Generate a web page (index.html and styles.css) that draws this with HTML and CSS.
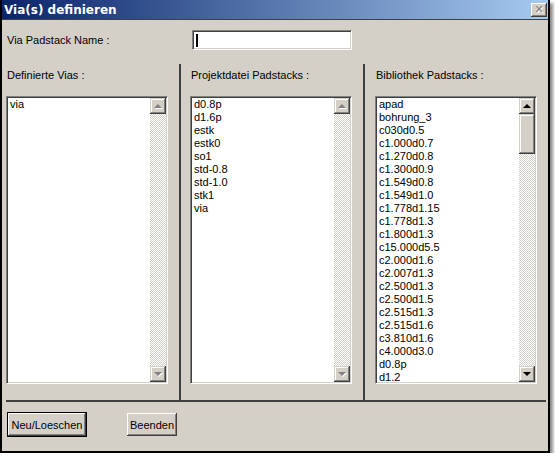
FILE: index.html
```html
<!DOCTYPE html>
<html lang="de">
<head>
  <meta charset="UTF-8">
  <title>Via(s) definieren</title>
  <link rel="stylesheet" href="styles.css">
</head>
<body>
  <div class="window">
    <div class="titlebar">
      <span class="title">Via(s) definieren</span>
      <span class="close"><span class="close-x">&#x2715;</span></span>
    </div>

    <div class="content">
      <!-- Name -->
      <div class="name-row">
        <span class="name-label">Via Padstack Name :</span>
        <div class="textbox"><span class="caret"></span></div>
      </div>

      <!-- drei Listen -->
      <div class="panels">
        <div class="panel panel-1">
          <div class="panel-label">Definierte Vias :</div>
          <div class="list">
            <div class="items">
              <div>via</div>
            </div>
            <div class="scrollbar">
              <div class="sb-btn"><span class="arrow up disabled"></span></div>
              <div class="track"></div>
              <div class="sb-btn"><span class="arrow down disabled"></span></div>
            </div>
          </div>
        </div>
        <div class="divider"></div>
        <div class="panel panel-2">
          <div class="panel-label">Projektdatei Padstacks :</div>
          <div class="list">
            <div class="items">
              <div>d0.8p</div>
              <div>d1.6p</div>
              <div>estk</div>
              <div>estk0</div>
              <div>so1</div>
              <div>std-0.8</div>
              <div>std-1.0</div>
              <div>stk1</div>
              <div>via</div>
            </div>
            <div class="scrollbar">
              <div class="sb-btn"><span class="arrow up disabled"></span></div>
              <div class="track"></div>
              <div class="sb-btn"><span class="arrow down disabled"></span></div>
            </div>
          </div>
        </div>
        <div class="divider"></div>
        <div class="panel panel-3">
          <div class="panel-label">Bibliothek Padstacks :</div>
          <div class="list">
            <div class="items">
              <div>apad</div>
              <div>bohrung_3</div>
              <div>c030d0.5</div>
              <div>c1.000d0.7</div>
              <div>c1.270d0.8</div>
              <div>c1.300d0.9</div>
              <div>c1.549d0.8</div>
              <div>c1.549d1.0</div>
              <div>c1.778d1.15</div>
              <div>c1.778d1.3</div>
              <div>c1.800d1.3</div>
              <div>c15.000d5.5</div>
              <div>c2.000d1.6</div>
              <div>c2.007d1.3</div>
              <div>c2.500d1.3</div>
              <div>c2.500d1.5</div>
              <div>c2.515d1.3</div>
              <div>c2.515d1.6</div>
              <div>c3.810d1.6</div>
              <div>c4.000d3.0</div>
              <div>d0.8p</div>
              <div>d1.2</div>
            </div>
            <div class="scrollbar">
              <div class="sb-btn"><span class="arrow up"></span></div>
              <div class="thumb"></div>
              <div class="track"></div>
              <div class="sb-btn"><span class="arrow down"></span></div>
            </div>
          </div>
        </div>
      </div>

      <div class="hline"></div>

      <div class="buttons">
        <button class="btn btn-default">Neu/Loeschen</button>
        <button class="btn btn-close">Beenden</button>
      </div>
    </div>
  </div>
</body>
</html>
```

FILE: styles.css
```css
html, body {
  margin: 0;
  padding: 0;
  background: white;
}

body {
  font-family: 'Liberation Sans', Arial, sans-serif;
  font-size: 11px;
  color: black;
}

.window {
  width: 550px;
  height: 453px;
  box-sizing: border-box;
  border: 2px solid black;
  border-top: 0;
  background: #d4d0c8;
  box-shadow: 3px 3px 3px rgba(0, 0, 0, 0.45);
  display: flex;
  flex-direction: column;
}

/* Titelleiste */
.titlebar {
  height: 19px;
  border-bottom: 1px solid #404040;
  background: linear-gradient(to right, #0a246a, #a6caf0);
  display: flex;
  align-items: center;
  justify-content: space-between;
  padding: 0 1px 0 2px;
}

.title {
  color: white;
  font-family: 'DejaVu Sans', sans-serif;
  font-weight: bold;
  font-size: 12px;
}

.close {
  width: 16px;
  height: 14px;
  box-sizing: border-box;
  background: #d4d0c8;
  box-shadow: inset -1px -1px #404040, inset 1px 1px #fff, inset -2px -2px #808080, inset 2px 2px #d4d0c8;
  display: flex;
  align-items: center;
  justify-content: center;
}

.close-x {
  color: #808080;
  font-size: 11px;
  line-height: 11px;
  font-family: 'DejaVu Sans', sans-serif;
  font-weight: bold;
  text-shadow: 1px 1px 0 #fff;
}

.content {
  flex: 1;
  padding: 0 2px 0 4px;
  display: flex;
  flex-direction: column;
}

.name-row {
  margin-top: 10px;
  height: 20px;
  display: flex;
  align-items: center;
}

.name-label {
  width: 185px;
  padding-left: 1px;
}

.textbox {
  width: 160px;
  height: 20px;
  box-sizing: border-box;
  background: white;
  border: 1px solid;
  border-color: #808080 #fff #fff #808080;
  box-shadow: inset 1px 1px #404040, inset -1px -1px #d4d0c8;
  padding: 3px 0 0 3px;
}

.caret {
  display: block;
  width: 2px;
  height: 13px;
  background: black;
}

/* Listen */
.panels {
  margin-top: 14px;
  height: 336px;
  display: flex;
}

.panel {
  padding-top: 5px;
  box-sizing: border-box;
}

.panel-1 { width: 173px; }
.panel-2 { width: 182px; padding-left: 9px; }
.panel-3 { width: 180px; padding-left: 10px; }

.panel-label {
  line-height: 13px;
  padding-left: 1px;
  margin-bottom: 14px;
}

.divider {
  width: 2px;
  background: #404040;
}

.list {
  width: 162px;
  height: 288px;
  box-sizing: border-box;
  background: white;
  border: 1px solid;
  border-color: #808080 #fff #fff #808080;
  box-shadow: inset 1px 1px #404040, inset -1px -1px #d4d0c8;
  padding: 1px;
  display: flex;
}

.items {
  flex: 1;
  padding: 0 2px;
  line-height: 13px;
  overflow: hidden;
}

.scrollbar {
  width: 16px;
  display: flex;
  flex-direction: column;
  background: repeating-conic-gradient(#d4d0c8 0 25%, #fff 0 50%) 0 0 / 2px 2px;
}

.sb-btn, .thumb {
  background: #d4d0c8;
  box-shadow: inset -1px -1px #404040, inset 1px 1px #d4d0c8, inset -2px -2px #808080, inset 2px 2px #fff;
}

.sb-btn {
  height: 16px;
  display: flex;
  align-items: center;
  justify-content: center;
}

.thumb {
  height: 40px;
}

.track {
  flex: 1;
}

.arrow {
  width: 0;
  height: 0;
  border-left: 4px solid transparent;
  border-right: 4px solid transparent;
}

.arrow.up { border-bottom: 4px solid black; }
.arrow.down { border-top: 4px solid black; }

.arrow.disabled.up { border-bottom-color: #808080; }
.arrow.disabled.down { border-top-color: #808080; }
.arrow.disabled { filter: drop-shadow(1px 1px 0 #fff); }

.hline {
  height: 2px;
  background: #404040;
}

/* Knöpfe */
.buttons {
  margin-top: 10px;
  padding-left: 1px;
  display: flex;
  align-items: flex-start;
  gap: 40px;
}

.btn {
  font-family: 'Liberation Sans', Arial, sans-serif;
  font-size: 11px;
  color: black;
  background: #d4d0c8;
  border: 0;
  margin: 0;
  padding: 0;
  box-shadow: inset -1px -1px #404040, inset 1px 1px #fff, inset -2px -2px #808080, inset 2px 2px #d4d0c8;
}

.btn-default {
  width: 80px;
  height: 25px;
  border: 1px solid black;
}

.btn-close {
  width: 50px;
  height: 23px;
  margin-top: 1px;
}
```
